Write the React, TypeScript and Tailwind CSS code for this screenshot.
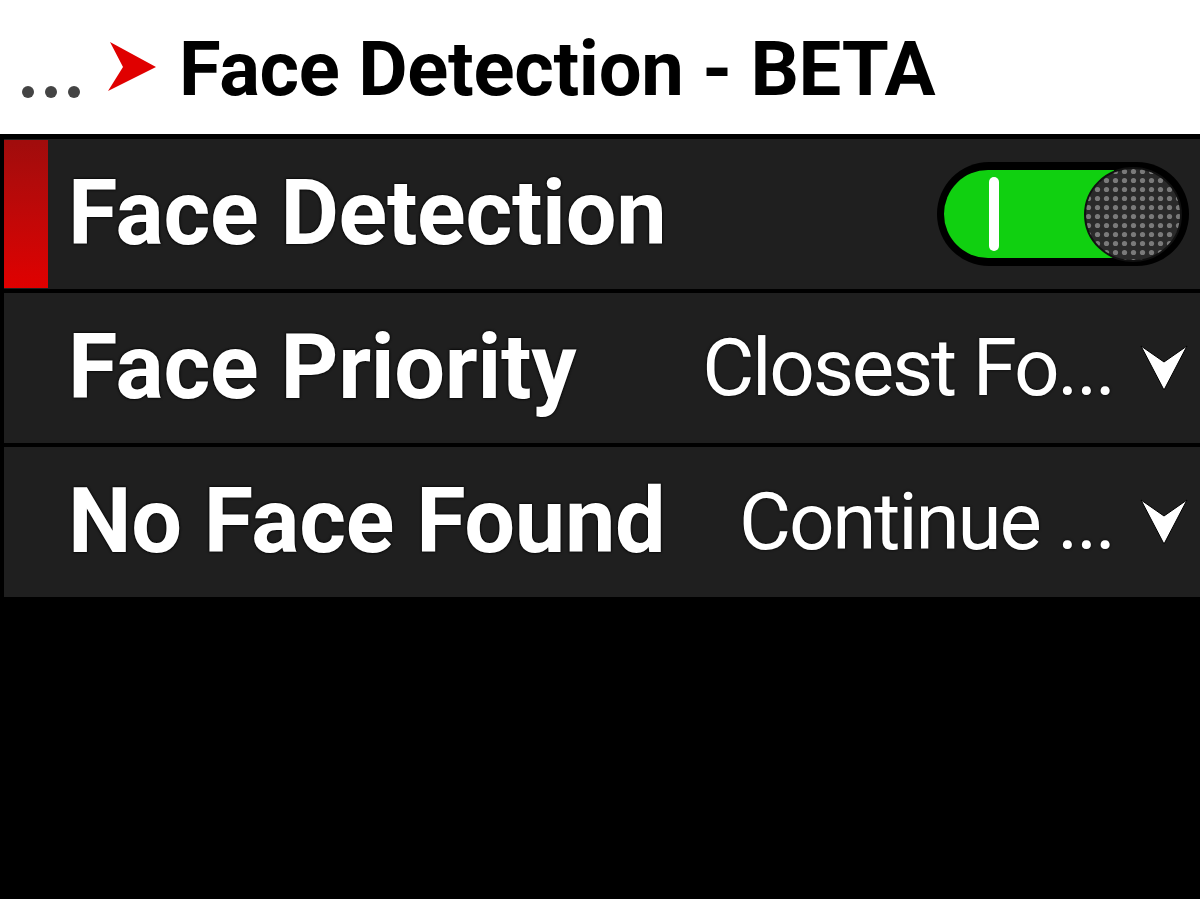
import React from 'react';

const font = "font-['Roboto','Liberation_Sans',sans-serif]";

function Chevron() {
  return (
    <svg width="48" height="46" viewBox="0 0 48 46" className="shrink-0">
      <path d="M1 1 L24 17 L47 1 L24 45 Z" fill="#fff" stroke="#000" strokeWidth="1" strokeLinejoin="round" />
    </svg>
  );
}

function Toggle() {
  return (
    <div className="relative w-[252px] h-[104px] rounded-full bg-black">
      <div className="absolute left-[7px] top-[8px] w-[170px] h-[88px] rounded-l-full bg-[#10d010]" />
      <div className="absolute left-[52px] top-[15px] w-[10px] h-[74px] rounded-full bg-white" />
      <svg className="absolute left-[147px] top-[5px]" width="98" height="95" viewBox="0 0 98 95">
        <defs>
          <pattern id="dots" width="9" height="9" patternUnits="userSpaceOnUse">
            <rect width="9" height="9" fill="#2a2a2a" />
            <circle cx="4.5" cy="4.5" r="2.6" fill="#7a7a7a" />
          </pattern>
        </defs>
        <ellipse cx="49" cy="47.5" rx="48" ry="46.5" fill="url(#dots)" stroke="#111" strokeWidth="2" />
      </svg>
    </div>
  );
}

function Row({ label, value, active, toggle }: { label: string; value?: string; active?: boolean; toggle?: boolean }) {
  return (
    <div className="relative h-[150px] bg-[#1f1f1f] flex items-center pl-[64px] pr-[12px]">
      {active && <div className="absolute left-0 top-px bottom-px w-[44px] bg-gradient-to-b from-[#a00c0c] to-[#e00000]" />}
      <span className="flex-1 text-white font-bold text-[90px] leading-none tracking-[-0.3px] [text-shadow:0_0_3px_#000,0_0_2px_#000]">
        {label}
      </span>
      {toggle && <div className="mr-[-1px]"><Toggle /></div>}
      {value && (
        <div className="flex items-center gap-[26px]">
          <span className="text-white text-[80px] leading-none tracking-[-2.2px] [text-shadow:0_0_3px_#000]">{value}</span>
          <Chevron />
        </div>
      )}
    </div>
  );
}

export default function App() {
  return (
    <div className={`${font} w-[1200px] h-[899px] bg-black overflow-hidden`}>
      <header className="h-[134px] bg-white flex items-center pl-[22px] pt-[4px]">
        <div className="flex items-end gap-[11px] pt-[46px] mr-[28px]">
          <span className="w-[12px] h-[12px] rounded-full bg-[#444]" />
          <span className="w-[12px] h-[12px] rounded-full bg-[#444]" />
          <span className="w-[12px] h-[12px] rounded-full bg-[#444]" />
        </div>
        <svg width="48" height="50" viewBox="0 0 48 50" className="mr-[23px] mb-[4px]">
          <path d="M2 0 L48 25 L0 49 L15 25 Z" fill="#e00000" />
        </svg>
        <h1 className="text-black font-bold text-[76px] leading-none tracking-[-0.3px]">Face Detection - BETA</h1>
      </header>
      <div className="flex flex-col gap-[4px] pt-[5px] pl-[4px]">
        <Row label="Face Detection" active toggle />
        <Row label="Face Priority" value="Closest Fo..." />
        <Row label="No Face Found" value="Continue ..." />
      </div>
    </div>
  );
}
